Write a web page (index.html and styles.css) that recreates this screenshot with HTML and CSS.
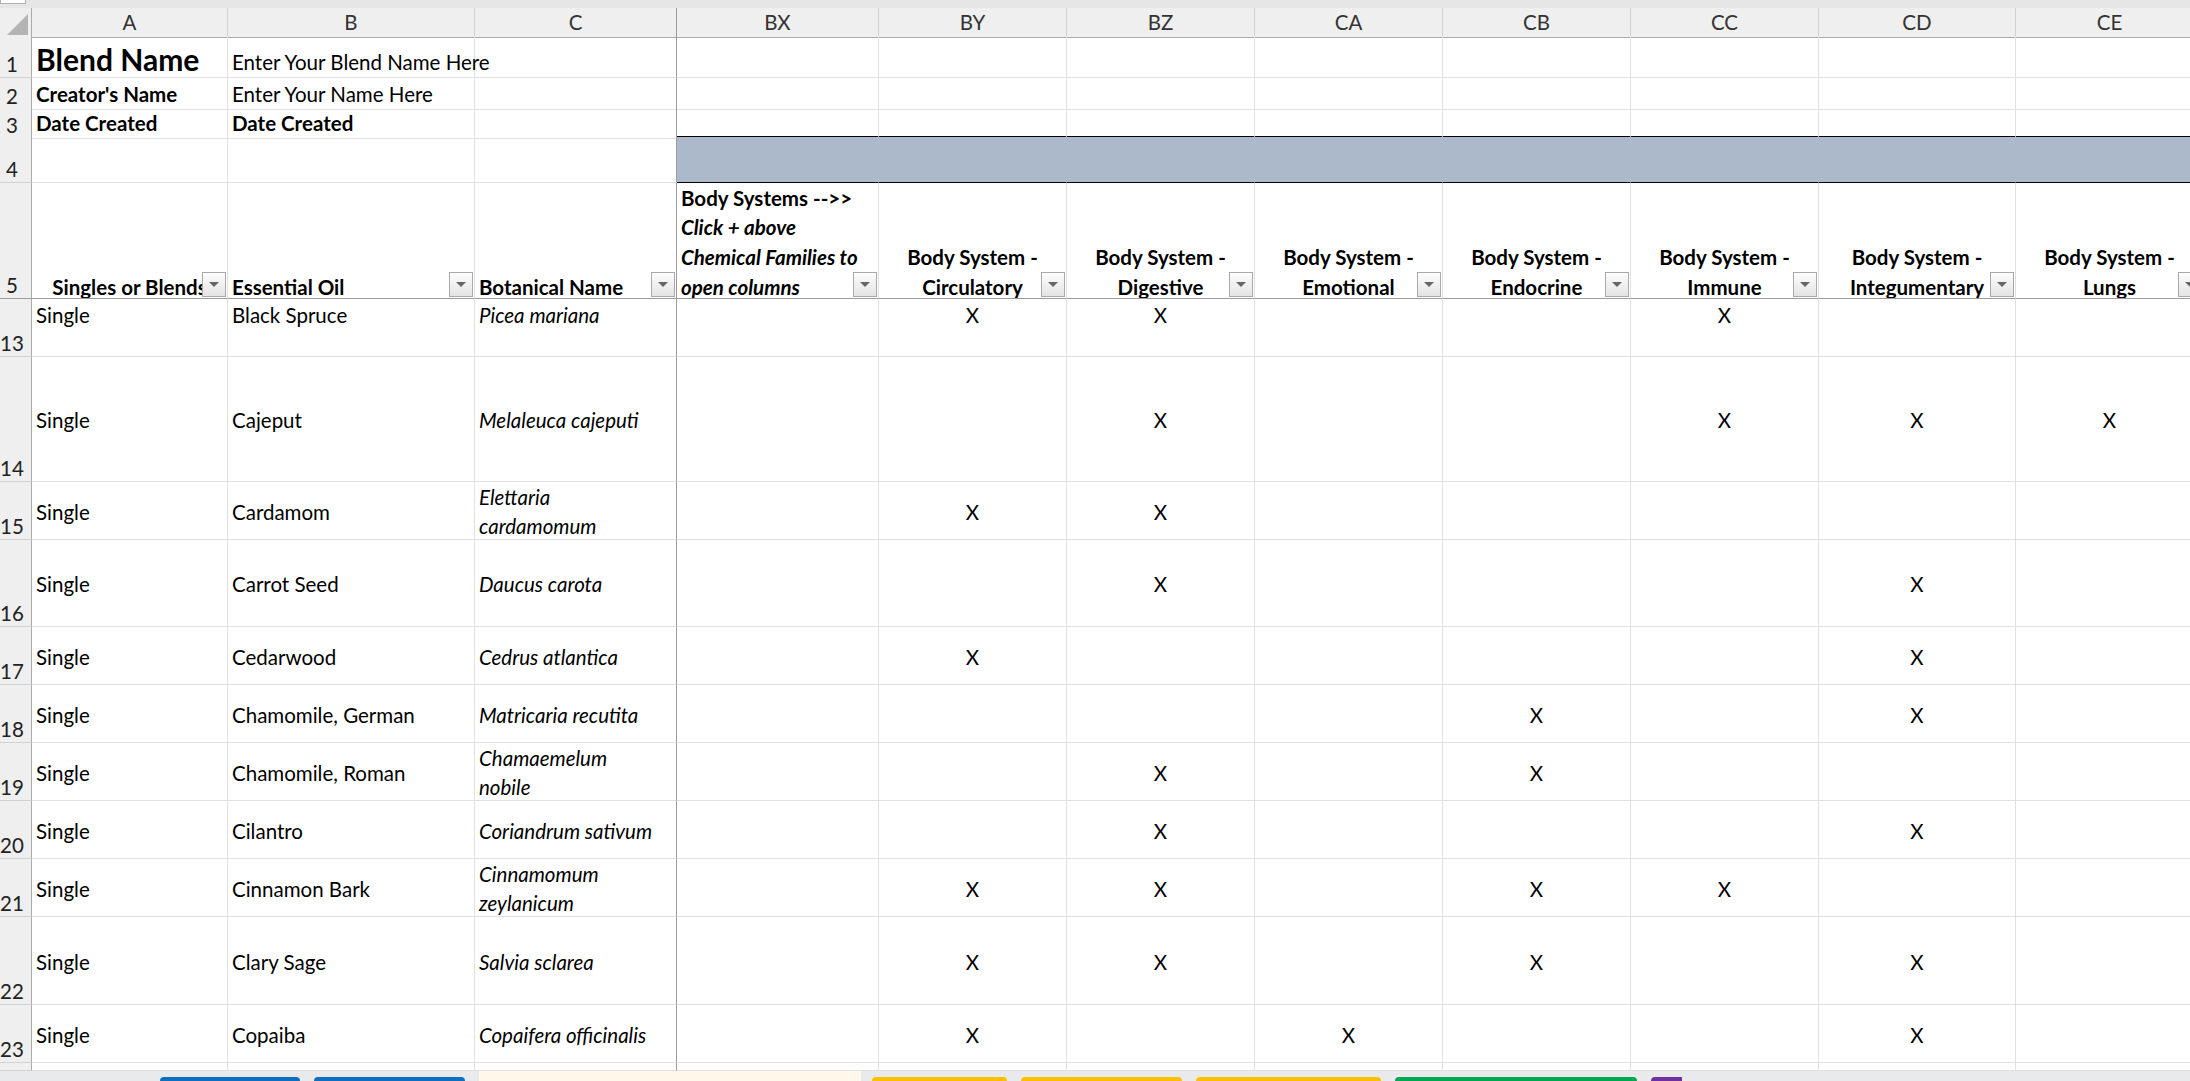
FILE: index.html
```html
<!DOCTYPE html>
<html lang="en">
<head>
  <meta charset="UTF-8" />
  <title>Blend Builder</title>
  <link rel="stylesheet" href="styles.css">
</head>
<body>
  <div class="app">
    <div class="topstrip"><div class="namebox"></div></div>

    <div class="sheet">
      <div class="row hdr">
        <div class="c corner"><span class="tri"></span></div>
        <div class="c">A</div><div class="c">B</div><div class="c">C</div>
        <div class="c">BX</div><div class="c">BY</div><div class="c">BZ</div>
        <div class="c">CA</div><div class="c">CB</div><div class="c">CC</div>
        <div class="c">CD</div><div class="c">CE</div>
      </div>

      <div class="row r1 bottom">
        <div class="c rh">1</div>
        <div class="c title">Blend Name</div>
        <div class="c wide">Enter Your Blend Name Here</div>
        <div class="c"></div><div class="c"></div><div class="c"></div><div class="c"></div>
        <div class="c"></div><div class="c"></div><div class="c"></div><div class="c"></div><div class="c"></div>
      </div>
      <div class="row r2 info">
        <div class="c rh">2</div>
        <div class="c b">Creator's Name</div>
        <div class="c">Enter Your Name Here</div>
        <div class="c"></div><div class="c"></div><div class="c"></div><div class="c"></div>
        <div class="c"></div><div class="c"></div><div class="c"></div><div class="c"></div><div class="c"></div>
      </div>
      <div class="row r3 info">
        <div class="c rh">3</div>
        <div class="c b">Date Created</div>
        <div class="c b">Date Created</div>
        <div class="c"></div><div class="c"></div><div class="c"></div><div class="c"></div>
        <div class="c"></div><div class="c"></div><div class="c"></div><div class="c"></div><div class="c"></div>
      </div>
      <div class="row r4">
        <div class="c rh">4</div>
        <div class="c"></div><div class="c"></div><div class="c"></div>
        <div class="c band"></div><div class="c band"></div><div class="c band"></div><div class="c band"></div>
        <div class="c band"></div><div class="c band"></div><div class="c band"></div><div class="c band"></div>
      </div>

      <div class="row r5">
        <div class="c rh">5</div>
        <div class="c mid"><span>Singles or Blends</span><i class="flt"></i></div>
        <div class="c"><span>Essential Oil</span><i class="flt"></i></div>
        <div class="c"><span>Botanical Name</span><i class="flt"></i></div>
        <div class="c note"><span>Body Systems --&gt;&gt;<br><em>Click + above<br>Chemical Families to<br>open columns</em></span><i class="flt"></i></div>
        <div class="c mid"><span>Body System -<br>Circulatory</span><i class="flt"></i></div>
        <div class="c mid"><span>Body System -<br>Digestive</span><i class="flt"></i></div>
        <div class="c mid"><span>Body System -<br>Emotional</span><i class="flt"></i></div>
        <div class="c mid"><span>Body System -<br>Endocrine</span><i class="flt"></i></div>
        <div class="c mid"><span>Body System -<br>Immune</span><i class="flt"></i></div>
        <div class="c mid"><span>Body System -<br>Integumentary</span><i class="flt"></i></div>
        <div class="c mid"><span>Body System -<br>Lungs</span><i class="flt"></i></div>
      </div>

      <div class="row data r13 top">
        <div class="c rh">13</div>
        <div class="c">Single</div><div class="c">Black Spruce</div><div class="c">Picea mariana</div>
        <div class="c"></div><div class="c">X</div><div class="c">X</div><div class="c"></div>
        <div class="c"></div><div class="c">X</div><div class="c"></div><div class="c"></div>
      </div>
      <div class="row data r14">
        <div class="c rh">14</div>
        <div class="c">Single</div><div class="c">Cajeput</div><div class="c">Melaleuca cajeputi</div>
        <div class="c"></div><div class="c"></div><div class="c">X</div><div class="c"></div>
        <div class="c"></div><div class="c">X</div><div class="c">X</div><div class="c">X</div>
      </div>
      <div class="row data r58">
        <div class="c rh">15</div>
        <div class="c">Single</div><div class="c">Cardamom</div><div class="c">Elettaria<br>cardamomum</div>
        <div class="c"></div><div class="c">X</div><div class="c">X</div><div class="c"></div>
        <div class="c"></div><div class="c"></div><div class="c"></div><div class="c"></div>
      </div>
      <div class="row data r87">
        <div class="c rh">16</div>
        <div class="c">Single</div><div class="c">Carrot Seed</div><div class="c">Daucus carota</div>
        <div class="c"></div><div class="c"></div><div class="c">X</div><div class="c"></div>
        <div class="c"></div><div class="c"></div><div class="c">X</div><div class="c"></div>
      </div>
      <div class="row data r58">
        <div class="c rh">17</div>
        <div class="c">Single</div><div class="c">Cedarwood</div><div class="c">Cedrus atlantica</div>
        <div class="c"></div><div class="c">X</div><div class="c"></div><div class="c"></div>
        <div class="c"></div><div class="c"></div><div class="c">X</div><div class="c"></div>
      </div>
      <div class="row data r58">
        <div class="c rh">18</div>
        <div class="c">Single</div><div class="c">Chamomile, German</div><div class="c">Matricaria recutita</div>
        <div class="c"></div><div class="c"></div><div class="c"></div><div class="c"></div>
        <div class="c">X</div><div class="c"></div><div class="c">X</div><div class="c"></div>
      </div>
      <div class="row data r58">
        <div class="c rh">19</div>
        <div class="c">Single</div><div class="c">Chamomile, Roman</div><div class="c">Chamaemelum<br>nobile</div>
        <div class="c"></div><div class="c"></div><div class="c">X</div><div class="c"></div>
        <div class="c">X</div><div class="c"></div><div class="c"></div><div class="c"></div>
      </div>
      <div class="row data r58">
        <div class="c rh">20</div>
        <div class="c">Single</div><div class="c">Cilantro</div><div class="c">Coriandrum sativum</div>
        <div class="c"></div><div class="c"></div><div class="c">X</div><div class="c"></div>
        <div class="c"></div><div class="c"></div><div class="c">X</div><div class="c"></div>
      </div>
      <div class="row data r58">
        <div class="c rh">21</div>
        <div class="c">Single</div><div class="c">Cinnamon Bark</div><div class="c">Cinnamomum<br>zeylanicum</div>
        <div class="c"></div><div class="c">X</div><div class="c">X</div><div class="c"></div>
        <div class="c">X</div><div class="c">X</div><div class="c"></div><div class="c"></div>
      </div>
      <div class="row data r88">
        <div class="c rh">22</div>
        <div class="c">Single</div><div class="c">Clary Sage</div><div class="c">Salvia sclarea</div>
        <div class="c"></div><div class="c">X</div><div class="c">X</div><div class="c"></div>
        <div class="c">X</div><div class="c"></div><div class="c">X</div><div class="c"></div>
      </div>
      <div class="row data r58">
        <div class="c rh">23</div>
        <div class="c">Single</div><div class="c">Copaiba</div><div class="c">Copaifera officinalis</div>
        <div class="c"></div><div class="c">X</div><div class="c"></div><div class="c">X</div>
        <div class="c"></div><div class="c"></div><div class="c">X</div><div class="c"></div>
      </div>
      <div class="row data r8">
        <div class="c rh"></div>
        <div class="c"></div><div class="c"></div><div class="c"></div>
        <div class="c"></div><div class="c"></div><div class="c"></div><div class="c"></div>
        <div class="c"></div><div class="c"></div><div class="c"></div><div class="c"></div>
      </div>
    </div>

    <div class="tabs">
      <div class="tab blue t1"></div>
      <div class="tab blue t2"></div>
      <div class="tab active"></div>
      <div class="tab yellow t4"></div>
      <div class="tab yellow t5"></div>
      <div class="tab yellow t6"></div>
      <div class="tab green"></div>
      <div class="tab purple"></div>
    </div>
  </div>
</body>
</html>
```

FILE: styles.css
```css
* {
  box-sizing: border-box;
}

body {
  margin: 0;
  width: 2190px;
  height: 1081px;
  overflow: hidden;
  background-color: #ffffff;
  font-family: Lato, "Open Sans", sans-serif;
  font-size: 20.5px;
  color: #000000;
}

.app {
  display: flex;
  flex-direction: column;
  height: 1081px;
}

.topstrip {
  height: 8px;
  background-color: #e6e6e6;
}

.namebox {
  width: 26px;
  height: 4px;
  background-color: #ffffff;
  border: 1px solid #b0b0b0;
  border-top: none;
}

.sheet {
  flex: 1;
  overflow: hidden;
}

.row {
  display: grid;
  grid-template-columns: 32px 196px 247px 202px 202px 188px 188px 188px 188px 188px 197px 188px;
}

.c {
  position: relative;
  display: flex;
  align-items: center;
  padding: 0 4px;
  border-right: 1px solid #e1e1e1;
  border-bottom: 1px solid #e1e1e1;
  white-space: nowrap;
  line-height: 29px;
}

/* frozen panes */
.row > .c:nth-child(4) {
  border-right-color: #9c9c9c;
}

.row > .c:nth-child(n+5) {
  justify-content: center;
}

/* column letters */
.hdr {
  height: 28px;
}

.hdr .c {
  justify-content: center;
  background-color: #efefef;
  border-right-color: #d2d2d2;
  border-bottom-color: #ababab;
  color: #333333;
}

.hdr .corner {
  border-right-color: #ababab;
}

.tri {
  position: absolute;
  right: 3px;
  bottom: 2px;
  width: 0;
  height: 0;
  border-left: 21px solid transparent;
  border-bottom: 21px solid #b4b4b4;
}

/* row numbers */
.rh {
  justify-content: center;
  align-items: flex-end;
  padding: 0 7px 0 0;
  background-color: #efefef;
  border-right-color: #ababab;
  border-bottom-color: #d2d2d2;
  color: #222222;
  line-height: 26px;
}

.r1 { height: 42px; }
.r2, .r3 { height: 29px; }
.r4 { height: 47px; }
.r5 { height: 116px; }
.r13, .r58 { height: 58px; }
.r14 { height: 125px; }
.r87 { height: 87px; }
.r88 { height: 88px; }
.r8 { height: 8px; }

.bottom .c {
  align-items: flex-end;
}

.info .c:not(.rh) {
  padding-top: 2px;
}

.title {
  font-size: 30px;
  font-weight: 700;
  line-height: 36px;
}

.r1 .wide {
  line-height: 30px;
  padding-bottom: 0;
}

.b {
  font-weight: 700;
}

.band {
  background-color: #acb9ca;
  border-right-color: #acb9ca;
  border-bottom-color: #000000;
  box-shadow: inset 0 1px 0 #000000;
}

/* header row with filters */
.r5 .c {
  align-items: flex-end;
  justify-content: flex-start;
  font-weight: 700;
  line-height: 29.7px;
  padding-bottom: 0;
  border-bottom-color: #9c9c9c;
  overflow: hidden;
}

.r5 .c span {
  margin-bottom: -4.5px;
}

.r5 .rh {
  justify-content: center;
  font-weight: 400;
  line-height: 26px;
}

.r5 .c.mid {
  justify-content: center;
  text-align: center;
}

.r5 .c.note {
  justify-content: flex-start;
}

.r5 .note em {
  font-style: italic;
}

.flt {
  position: absolute;
  right: 1px;
  bottom: 1px;
  width: 24px;
  height: 25px;
  display: flex;
  align-items: center;
  justify-content: center;
  border: 1px solid #a9a9a9;
  background: linear-gradient(#fdfdfd, #e4e4e4);
}

.flt::after {
  content: "";
  width: 0;
  height: 0;
  border-left: 5px solid transparent;
  border-right: 5px solid transparent;
  border-top: 5px solid #666666;
}

/* data rows */
.data .c:nth-child(4) {
  font-style: italic;
}

.data .c {
  overflow: hidden;
}

.data .c:not(.rh) {
  padding-top: 3px;
}

.top .c:not(.rh) {
  align-items: flex-start;
  padding-top: 2px;
}

/* sheet tabs */
.tabs {
  height: 10px;
  display: flex;
  align-items: flex-end;
  gap: 14px;
  padding-left: 160px;
  background-color: #e8eaec;
}

.tab {
  height: 4px;
  border-radius: 6px 6px 0 0;
}

.blue { background-color: #106ebe; }
.t1 { width: 140px; }
.t2 { width: 151px; }

.active {
  width: 382px;
  height: 10px;
  background-color: #fdf8e9;
  border-radius: 0;
  margin-right: -3px;
}

.yellow { background-color: #ffc000; }
.t4 { width: 135px; }
.t5 { width: 161px; }
.t6 { width: 185px; }

.green {
  width: 242px;
  background-color: #00a84f;
}

.purple {
  width: 31px;
  background-color: #7030a0;
  border-radius: 6px 0 0 0;
}
```
